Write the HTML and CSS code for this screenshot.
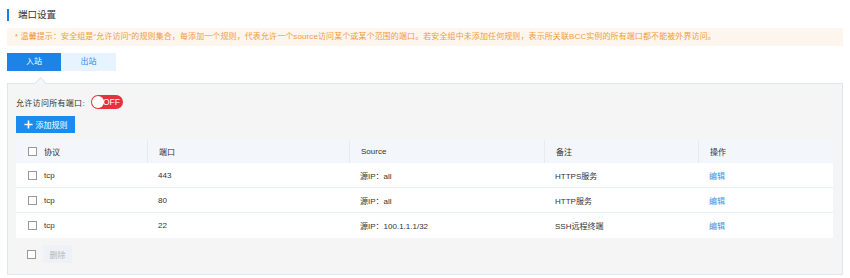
FILE: index.html
```html
<!DOCTYPE html>
<html lang="zh">
<head>
<meta charset="utf-8">
<title>端口设置</title>
<link rel="stylesheet" href="styles.css">
</head>
<body>
<div class="page">
  <div class="title">端口设置</div>
  <div class="notice">* 温馨提示：安全组是“允许访问”的规则集合，每添加一个规则，代表允许一个source访问某个或某个范围的端口。若安全组中未添加任何规则，表示所关联BCC实例的所有端口都不能被外界访问。</div>
  <div class="tabs">
    <div class="tab active">入站</div>
    <div class="tab">出站</div>
  </div>
  <div class="panel">
    <div class="switch-row">
      <span class="label">允许访问所有端口:</span>
      <span class="switch"><span class="knob"></span><span class="switch-text">OFF</span></span>
    </div>
    <div class="add-row">
      <button class="btn-add"><svg class="plus" viewBox="0 0 10 10" width="9" height="9"><path d="M5 0.5v9M0.5 5h9" stroke="#fff" stroke-width="1.8"/></svg>添加规则</button>
    </div>
    <div class="table">
      <div class="row head">
        <div class="cell c1"><span class="cb"></span>协议</div>
        <div class="cell c2">端口</div>
        <div class="cell c3">Source</div>
        <div class="cell c4">备注</div>
        <div class="cell c5">操作</div>
      </div>
      <div class="row">
        <div class="cell c1"><span class="cb"></span>tcp</div>
        <div class="cell c2">443</div>
        <div class="cell c3">源IP：all</div>
        <div class="cell c4">HTTPS服务</div>
        <div class="cell c5"><a class="link">编辑</a></div>
      </div>
      <div class="row">
        <div class="cell c1"><span class="cb"></span>tcp</div>
        <div class="cell c2">80</div>
        <div class="cell c3">源IP：all</div>
        <div class="cell c4">HTTP服务</div>
        <div class="cell c5"><a class="link">编辑</a></div>
      </div>
      <div class="row">
        <div class="cell c1"><span class="cb"></span>tcp</div>
        <div class="cell c2">22</div>
        <div class="cell c3">源IP：100.1.1.1/32</div>
        <div class="cell c4">SSH远程终端</div>
        <div class="cell c5"><a class="link">编辑</a></div>
      </div>
    </div>
    <div class="footer">
      <span class="cb"></span>
      <button class="btn-del">删除</button>
    </div>
  </div>
</div>
</body>
</html>
```
FILE: styles.css
```css
* { box-sizing: border-box; }
html, body { margin: 0; padding: 0; background: #fff; }
body {
  font-family: "Liberation Sans", "Noto Sans CJK SC", sans-serif;
  color: #333;
  font-size: 8px;
}
.page { padding: 9px 7px 0 7px; }
.title {
  height: 12px;
  line-height: 12px;
  border-left: 2px solid #1a80e6;
  padding-left: 9px;
  font-size: 9.5px;
  color: #333;
}
.notice {
  margin-top: 7px;
  height: 18px;
  line-height: 18px;
  background: #fcf6ef;
  color: #f39c3c;
  padding-left: 8px;
  font-size: 8px;
  letter-spacing: 0.1px;
  white-space: nowrap;
}
.tabs { margin-top: 7px; display: flex; height: 18px; }
.tab {
  width: 55px;
  height: 18px;
  line-height: 18px;
  text-align: center;
  background: #e7f3fe;
  color: #2d8ae6;
  font-size: 8px;
}
.tab.active { width: 54px; background: #1c84e6; color: #fff; }
.panel {
  position: relative;
  margin-top: 12px;
  height: 192px;
  background: #f5f5f5;
  border: 1px solid #dfe6ee;
  padding: 0 9px 0 8px;
}
.panel::before {
  content: "";
  position: absolute;
  left: 28px;
  top: -5px;
  width: 8px;
  height: 8px;
  background: #f5f5f5;
  border-left: 1px solid #dfe6ee;
  border-top: 1px solid #dfe6ee;
  transform: rotate(45deg);
}
.switch-row {
  margin-top: 11px;
  height: 14px;
  display: flex;
  align-items: center;
  gap: 6px;
}
.label { letter-spacing: 0.3px; }
.switch {
  position: relative;
  width: 32px;
  height: 14px;
  border-radius: 7px;
  background: #e8313b;
  display: flex;
  align-items: center;
  justify-content: flex-end;
  padding-right: 3px;
}
.knob {
  position: absolute;
  left: 1px;
  top: 1px;
  width: 12px;
  height: 12px;
  border-radius: 50%;
  background: #fff;
}
.switch-text { color: #fff; font-size: 8.5px; line-height: 14px; }
.add-row { margin-top: 7px; height: 17px; }
.btn-add {
  height: 17px;
  width: 59px;
  border: 0;
  background: #1a8bef;
  color: #fff;
  font-family: inherit;
  font-size: 8px;
  padding: 0;
  display: flex;
  align-items: center;
  justify-content: center;
  gap: 3px;
}
.table { margin-top: 7px; background: #fff; }
.row { display: flex; height: 25px; border-bottom: 1px solid #e9eef4; }
.row.head { height: 23px; background: #f3f6fa; border-bottom: 0; }
.row:last-child { border-bottom: 0; }
.cell {
  display: flex;
  align-items: center;
  padding-left: 11px;
  font-size: 8px;
  color: #333;
}
.head .cell + .cell { border-left: 1px solid #e6ebf2; }
.c1 { width: 131px; padding-left: 12px; }
.c2 { width: 202px; }
.c3 { width: 195px; }
.c4 { width: 154px; }
.c5 { flex: 1; }
.cb {
  display: inline-block;
  width: 9px;
  height: 9px;
  border: 1px solid #999;
  background: #fff;
  margin-right: 7px;
}
.link { color: #3a93e4; }
.footer {
  margin-top: 7px;
  height: 18px;
  display: flex;
  align-items: center;
  padding-left: 11px;
}
.footer .cb { margin-right: 7px; }
.btn-del {
  width: 29px;
  height: 18px;
  border: 0;
  background: #eef1f5;
  color: #b5b9bf;
  font-family: inherit;
  font-size: 8px;
  padding: 0;
}
```
